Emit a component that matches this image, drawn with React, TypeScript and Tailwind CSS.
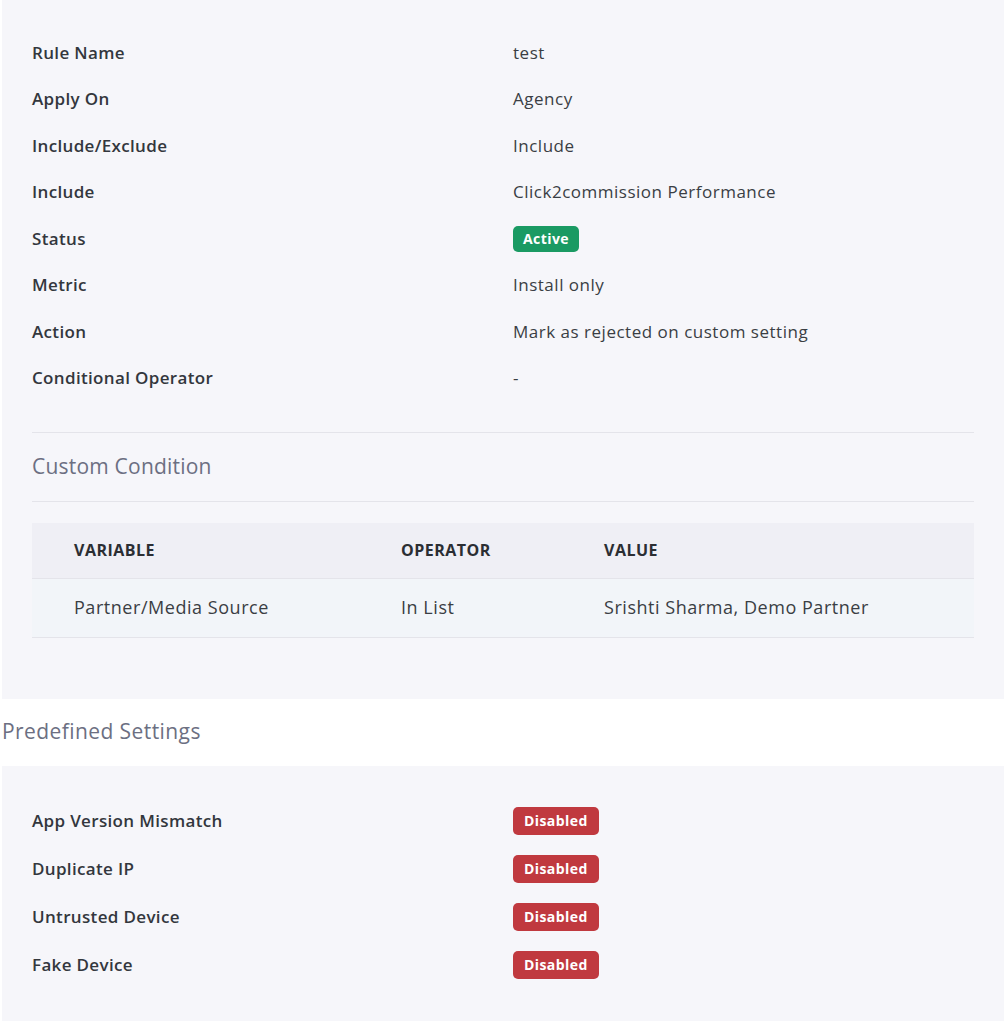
import React from 'react';

const font = { fontFamily: '"Open Sans", "Noto Sans", sans-serif' };

const details: { label: string; value: React.ReactNode }[] = [
  { label: 'Rule Name', value: 'test' },
  { label: 'Apply On', value: 'Agency' },
  { label: 'Include/Exclude', value: 'Include' },
  { label: 'Include', value: 'Click2commission Performance' },
  {
    label: 'Status',
    value: (
      <span className="inline-flex h-[26px] items-center rounded-[5px] bg-[#1a9a63] px-[10px] text-[14px] font-bold tracking-[0.03em] text-white">
        Active
      </span>
    ),
  },
  { label: 'Metric', value: 'Install only' },
  { label: 'Action', value: 'Mark as rejected on custom setting' },
  { label: 'Conditional Operator', value: '-' },
];

const predefined = ['App Version Mismatch', 'Duplicate IP', 'Untrusted Device', 'Fake Device'];

const DisabledBadge = () => (
  <span className="inline-flex h-[28px] items-center rounded-[5px] bg-[#c0393f] px-[11px] text-[14px] font-bold tracking-[0.03em] text-white">
    Disabled
  </span>
);

export default function App() {
  return (
    <div className="min-h-screen bg-white text-[#3a3e44]" style={font}>
      {/* Rule details */}
      <div className="ml-[2px] bg-[#f6f6fa] pb-[61px] pl-[30px] pr-[30px] pt-[29px]">
        <div className="flex flex-col">
          {details.map((d) => (
            <div key={d.label} className="flex h-[46.5px] items-center text-[17px]">
              <div className="w-[481px] font-semibold tracking-[0.02em] text-[#33373d]">{d.label}</div>
              <div className="tracking-[0.03em]">{d.value}</div>
            </div>
          ))}
        </div>

        <div className="mt-[31px] border-t border-[#e4e4ea]" />
        <div className="flex h-[68px] items-center text-[21px] font-normal tracking-[0.01em] text-[#6c6f82]">
          Custom Condition
        </div>
        <div className="border-t border-[#e4e4ea]" />

        <table className="mt-[21px] w-full border-collapse text-left">
          <thead>
            <tr className="h-[55px] bg-[#efeff5]">
              <th className="w-[369px] pl-[42px] text-[16px] font-bold uppercase tracking-[0.03em] text-[#2b2e33]">Variable</th>
              <th className="w-[203px] text-[16px] font-bold uppercase tracking-[0.03em] text-[#2b2e33]">Operator</th>
              <th className="text-[16px] font-bold uppercase tracking-[0.03em] text-[#2b2e33]">Value</th>
            </tr>
          </thead>
          <tbody>
            <tr className="h-[59px] border-y border-[#e4e4ea] bg-[#f2f5f9] text-[18px] tracking-[0.03em]">
              <td className="pl-[42px]">Partner/Media Source</td>
              <td>In List</td>
              <td>Srishti Sharma, Demo Partner</td>
            </tr>
          </tbody>
        </table>
      </div>

      {/* Predefined settings */}
      <div className="flex h-[67px] items-center pl-[2px] text-[21px] font-normal tracking-[0.02em] text-[#6c6f82]">
        Predefined Settings
      </div>
      <div className="ml-[2px] bg-[#f6f6fa] pb-[32px] pl-[30px] pt-[31px]">
        {predefined.map((p) => (
          <div key={p} className="flex h-[48px] items-center text-[17px]">
            <div className="w-[481px] font-semibold tracking-[0.02em] text-[#33373d]">{p}</div>
            <DisabledBadge />
          </div>
        ))}
      </div>
    </div>
  );
}
